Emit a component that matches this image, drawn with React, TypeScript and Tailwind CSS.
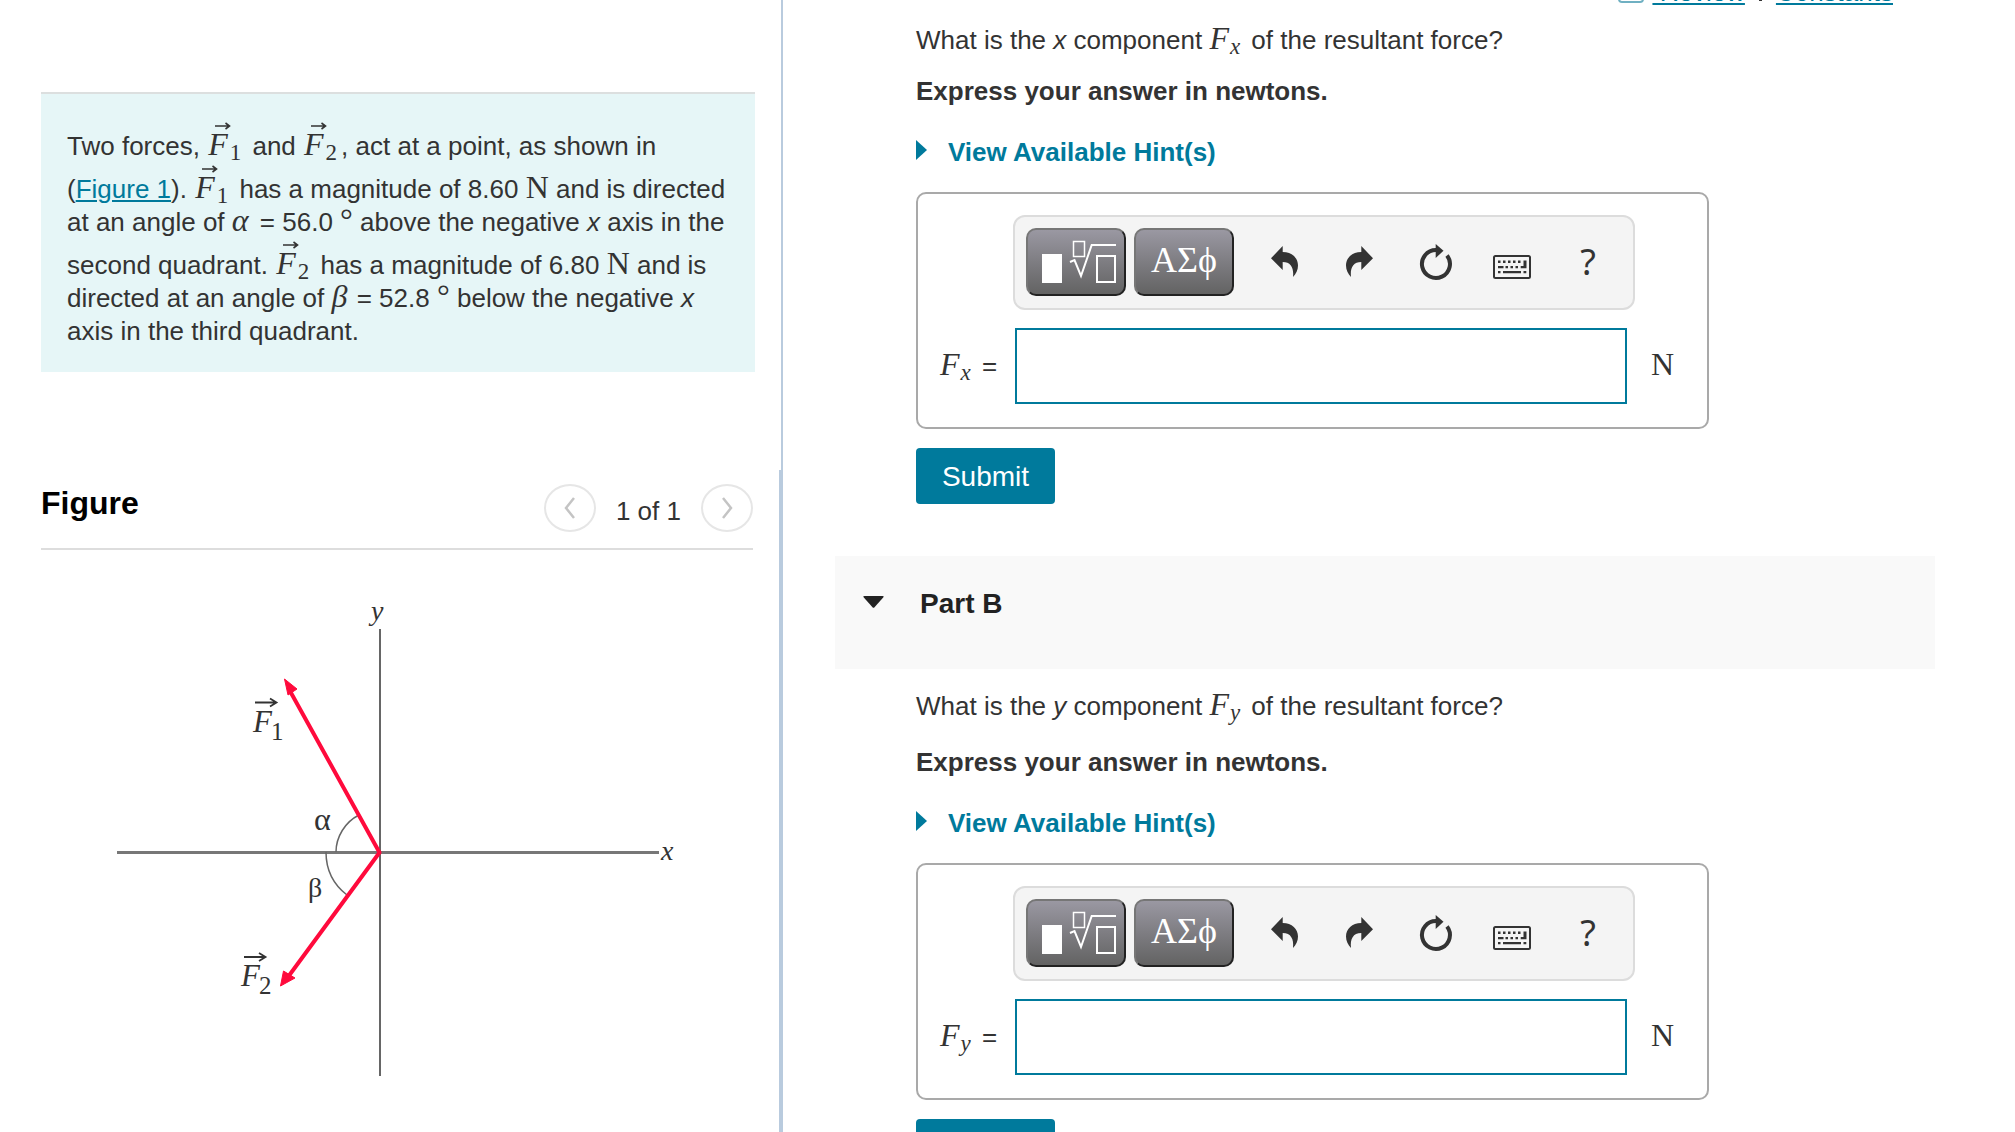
import type { ReactNode } from "react";

const SERIF = "font-['Liberation_Serif',serif]";

function MathText({ children }: { children: ReactNode }) {
  return <span className={`${SERIF} text-[32px] leading-6`}>{children}</span>;
}

function Subscripted({ base, sub }: { base: string; sub: string }) {
  return (
    <span className={`${SERIF} mr-1 text-[32px] leading-6 italic`}>
      {base}
      <sub className="bottom-[-5px] ml-px text-[23px]">{sub}</sub>
    </span>
  );
}

function ForceVector({ index }: { index: number }) {
  return (
    <span className={`${SERIF} relative mr-1 inline-block pt-2 pl-px text-[32px] leading-[33px]`}>
      <svg className="absolute top-0.5 left-2" width="16" height="8" viewBox="0 0 16 8" aria-hidden="true">
        <path d="M0 4H14M10.5 1L14.5 4L10.5 7" fill="none" stroke="#333" strokeWidth="1.6" />
      </svg>
      <i>F</i>
      <sub className="bottom-[-5px] ml-0.5 text-[23px]">{index}</sub>
    </span>
  );
}

function Degree() {
  return <span className={`${SERIF} text-[32px] leading-6`}>°</span>;
}

function ProblemStatement() {
  return (
    <section className="h-[470px] border-r-2 border-[#b9cbde] pt-[92px] pr-[26px] pl-[41px]">
      <div className="border-t-2 border-[#dcdfdf] bg-[#e6f6f7] px-[26px] pt-[26px] pb-6">
        <p className="leading-[33px]">
          Two forces, <ForceVector index={1} /> and <ForceVector index={2} />, act at a point, as shown in (
          <a href="#figure" className="text-[#007a9c] underline decoration-2 underline-offset-2">Figure 1</a>
          ). <ForceVector index={1} /> has a magnitude of 8.60 <MathText>N</MathText> and is directed at an angle of{" "}
          <MathText><i className="mr-1">α</i></MathText> = 56.0 <Degree /> above the negative <i>x</i> axis in the second quadrant.{" "}
          <ForceVector index={2} /> has a magnitude of 6.80 <MathText>N</MathText> and is directed at an angle of{" "}
          <MathText><i className="mr-0.5">β</i></MathText> = 52.8 <Degree /> below the negative <i>x</i> axis in the third quadrant.
        </p>
      </div>
    </section>
  );
}

function PagerButton({ label, points }: { label: string; points: string }) {
  return (
    <button
      type="button"
      aria-label={label}
      className="flex h-12 w-[52px] items-center justify-center rounded-[50%] border-2 border-[#e6e6e6]"
    >
      <svg width="14" height="24" viewBox="0 0 14 24" aria-hidden="true">
        <polyline points={points} fill="none" stroke="#c4c4c4" strokeWidth="2.5" />
      </svg>
    </button>
  );
}

function ForceDiagram() {
  return (
    <svg
      className={`${SERIF} mt-10 ml-[100px]`}
      width="600"
      height="500"
      viewBox="0 -10 600 500"
      role="img"
      aria-label="Forces F1 and F2 acting at the origin"
    >
      <g stroke="#666" fill="none">
        <path d="M280 29V476" stroke="#666" strokeWidth="2" />
        <path d="M17 252.5H559" stroke="#777" strokeWidth="3" />
        <path d="M236 252C236 237 245 222 259 215" strokeWidth="1.5" />
        <path d="M226 252C226 270 234 285 247 295" strokeWidth="1.5" />
      </g>
      <g stroke="#ff0a3c" fill="#ff0a3c">
        <path d="M190 91L279.5 252.5L188 377" fill="none" strokeWidth="4" strokeLinejoin="round" />
        <path d="M184.5 79L197 89L188 95Z" strokeWidth="1" />
        <path d="M180.5 386L183.5 371L195 378Z" strokeWidth="1" />
      </g>
      <g fill="#333" fontSize="28">
        <text x="271" y="20" fontStyle="italic">y</text>
        <text x="561" y="260" fontStyle="italic">x</text>
        <text x="214" y="230" fontSize="32">α</text>
        <text x="208" y="297">β</text>
        <text x="153" y="132" fontSize="31" fontStyle="italic">F</text>
        <text x="171" y="140" fontSize="25">1</text>
        <text x="141" y="386" fontSize="31" fontStyle="italic">F</text>
        <text x="159" y="394" fontSize="25">2</text>
      </g>
      <g stroke="#333" fill="none" strokeWidth="1.8">
        <path d="M155 102.5H176M170 98.5L176.5 102.5L170 106.5" />
        <path d="M144 357H165M159 353L165.5 357L159 361" />
      </g>
    </svg>
  );
}

function FigurePanel() {
  return (
    <section id="figure" className="flex-1 border-r-4 border-[#b9cbde] pr-[26px]">
      <div className="ml-[41px] flex items-start justify-between border-b-2 border-[#ddd] pt-3.5 pb-4">
        <h2 className="text-[32px] leading-[38px] font-bold text-black">Figure</h2>
        <div className="flex items-center gap-5">
          <PagerButton label="Previous figure" points="11,2 3,12 11,22" />
          <span className="pt-1.5 leading-[33px]">1 of 1</span>
          <PagerButton label="Next figure" points="3,2 11,12 3,22" />
        </div>
      </div>
      <ForceDiagram />
    </section>
  );
}

function ToolButton({ label, children }: { label: string; children: ReactNode }) {
  return (
    <button type="button" aria-label={label} className="flex h-[68px] w-[76px] items-center justify-center text-[#333]">
      {children}
    </button>
  );
}

function PaletteButton({ label, children }: { label: string; children: ReactNode }) {
  return (
    <button
      type="button"
      aria-label={label}
      className="flex h-[68px] w-[100px] items-center justify-center rounded-[10px] border-2 border-t-[#767676] border-r-[#222] border-b-[#222] border-l-[#767676] bg-linear-to-b from-[#9a98a2] to-[#636363] text-white"
    >
      {children}
    </button>
  );
}

const UNDO_PATH = "M7 16.3L18.7 4V10C28 10 34 16 34 23.5C34 28 32 32 29 35C30 26 27 20 18.7 20V28Z";

function Toolbar() {
  return (
    <div className="mr-[72px] ml-[95px] flex rounded-xl border-2 border-[#dcdcdc] bg-[#f4f4f4] px-[11px] pt-[11px] pb-3">
      <div className="flex gap-2">
        <PaletteButton label="Templates">
          <svg width="96" height="64" viewBox="0 0 96 64" fill="none" stroke="#fff" aria-hidden="true">
            <rect x="14" y="24" width="20" height="29" fill="#fff" stroke="none" />
            <rect x="45.5" y="11.5" width="11" height="15" strokeWidth="1.5" />
            <rect x="69" y="26" width="18" height="26" strokeWidth="2" />
            <path d="M42 32L46.5 30L53 46L63.7 15H88" strokeWidth="2" />
          </svg>
        </PaletteButton>
        <PaletteButton label="Symbols">
          <span className={`${SERIF} pb-1 text-[36px] leading-[42px]`}>ΑΣϕ</span>
        </PaletteButton>
      </div>
      <div className="ml-3 flex">
        <ToolButton label="Undo">
          <svg width="40" height="40" viewBox="0 0 40 40" fill="currentColor" aria-hidden="true">
            <path d={UNDO_PATH} />
          </svg>
        </ToolButton>
        <ToolButton label="Redo">
          <svg width="40" height="40" viewBox="0 0 40 40" fill="currentColor" aria-hidden="true">
            <path d={UNDO_PATH} transform="matrix(-1 0 0 1 40 0)" />
          </svg>
        </ToolButton>
        <ToolButton label="Reset">
          <svg width="40" height="40" viewBox="0 0 40 40" aria-hidden="true">
            <path d="M20 8A14 14 0 1 0 31 13.4" fill="none" stroke="currentColor" strokeWidth="4" />
            <path d="M19.7 2L27.5 8.7L19.7 16Z" fill="currentColor" />
          </svg>
        </ToolButton>
        <ToolButton label="Keyboard shortcuts">
          <svg width="40" height="40" viewBox="0 0 40 40" fill="currentColor" aria-hidden="true">
            <rect x="2" y="14" width="36" height="22" rx="1.5" fill="none" stroke="currentColor" strokeWidth="2" />
            <path d="M6 18.5h2.5v2.5h-2.5zM11 18.5h2.5v2.5h-2.5zM16 18.5h2.5v2.5h-2.5zM21 18.5h2.5v2.5h-2.5zM26 18.5h2.5v2.5h-2.5z" />
            <path d="M6 24h5.5v2.2H6zM13.5 24h2.5v2.2h-2.5zM18.5 24h2.5v2.2h-2.5zM23.5 24h2.5v2.2h-2.5z" />
            <path d="M31.5 18.5H34.5V26.2H28.7V24H31.5z" />
            <path d="M6 29h2.5v2.3H6zM11 29H29v2.3H11zM31.5 29h2.8v2.3h-2.8z" />
          </svg>
        </ToolButton>
        <ToolButton label="Help">
          <span className="font-['Noto_Sans',sans-serif] text-[36px] leading-10">?</span>
        </ToolButton>
      </div>
    </div>
  );
}

interface QuestionProps {
  id: string;
  axis: string;
  instructionGap: string;
}

function Question({ id, axis, instructionGap }: QuestionProps) {
  return (
    <form className="ml-[81px] max-w-[793px]" onSubmit={(event) => event.preventDefault()}>
      <p className="leading-[33px]">
        What is the <i>{axis}</i> component <Subscripted base="F" sub={axis} /> of the resultant force?
      </p>
      <p className={`${instructionGap} leading-[33px] font-bold`}>Express your answer in newtons.</p>
      <button type="button" className="mt-7 flex items-center leading-[33px] font-bold text-[#007a9c]">
        <svg className="mr-[21px] mb-1.5" width="11" height="20" viewBox="0 0 11 20" fill="currentColor" aria-hidden="true">
          <path d="M0 0L11 10L0 20Z" />
        </svg>
        View Available Hint(s)
      </button>
      <div className="mt-[23px] rounded-[10px] border-2 border-[#a9a9a9] pt-[21px] pb-[23px]">
        <Toolbar />
        <div className="mt-[18px] flex items-center">
          <label htmlFor={id} className="w-[97px] shrink-0 pl-[22px] whitespace-nowrap">
            <Subscripted base="F" sub={axis} /> =
          </label>
          <input id={id} type="text" className="h-[76px] min-w-0 flex-1 border-2 border-[#007a9c] bg-white px-3 outline-none" />
          <span className="w-20 shrink-0 pl-6"><MathText>N</MathText></span>
        </div>
      </div>
      <button type="submit" className="mt-[19px] h-14 w-[139px] rounded bg-[#007a9c] pt-0.5 text-[28px] text-white">Submit</button>
    </form>
  );
}

export default function App() {
  return (
    <div className="flex h-screen overflow-hidden bg-white font-['Liberation_Sans',Arial,sans-serif] text-[26px] text-[#333]">
      <aside className="flex w-[783px] shrink-0 flex-col">
        <ProblemStatement />
        <FigurePanel />
      </aside>
      <main className="min-w-0 flex-1 overflow-hidden pr-20 pl-[52px]">
        <nav className="-mt-6 mr-[42px] mb-[15px] flex items-center justify-end leading-[33px] text-[#007a9c]">
          <span className="mr-2 h-5 w-[26px] rounded-sm border-2 border-[#6fb0c2]" />
          <a href="#review" className="underline decoration-2 underline-offset-2 whitespace-pre"> Review</a>
          <span className="mx-3.5 mb-1 h-5 w-[3px] bg-[#333]" />
          <a href="#constants" className="underline decoration-2 underline-offset-2">Constants</a>
        </nav>
        <Question id="force-x" axis="x" instructionGap="mt-[18px]" />
        <section className="mt-[52px]">
          <button type="button" aria-expanded="true" className="mb-[21px] flex h-[113px] w-full items-start bg-[#f9f9f9] pt-8 pl-7 text-left text-[28px] leading-8 font-bold text-[#222]">
            <svg className="mt-2 mr-9" width="21" height="12" viewBox="0 0 21 12" fill="currentColor" aria-hidden="true">
              <path d="M1.5 0H19.5Q21.5 0 20.2 1.5L11.5 11.3Q10.5 12.3 9.5 11.3L.8 1.5Q-.5 0 1.5 0Z" />
            </svg>
            Part B
          </button>
          <Question id="force-y" axis="y" instructionGap="mt-[23px]" />
        </section>
      </main>
    </div>
  );
}
